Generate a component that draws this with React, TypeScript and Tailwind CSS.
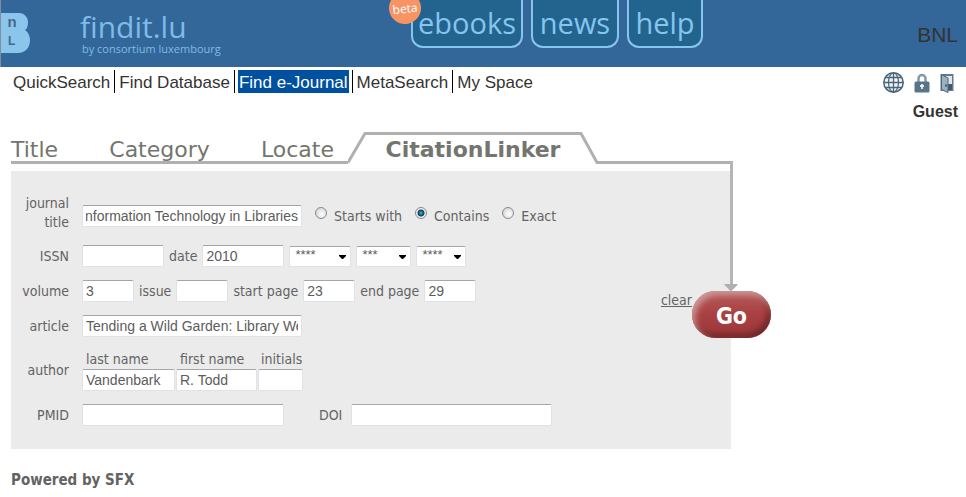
import type { InputHTMLAttributes, ReactNode } from 'react';

const navItems = ['QuickSearch', 'Find Database', 'Find e-Journal', 'MetaSearch', 'My Space'];

const matchModes = ['Starts with', 'Contains', 'Exact'];

const Field = ({ className = '', ...props }: InputHTMLAttributes<HTMLInputElement>) => (
  <input
    type="text"
    className={`h-[22px] px-[3px] bg-white border border-[#e0e2ea] border-t-[#a5a5ad] rounded-[2px] font-['Liberation_Sans',Arial,sans-serif] text-sm text-[#5c5c5c] ${className}`}
    {...props}
  />
);

const Row = ({ label, htmlFor, children }: { label: string; htmlFor: string; children: ReactNode }) => (
  <div className="flex items-center gap-[13px]">
    <label htmlFor={htmlFor} className="w-[58px] shrink-0 text-right">
      {label}
    </label>
    {children}
  </div>
);

const Picker = ({ label, value, className }: { label: string; value: string; className: string }) => (
  <span className={`relative ${className}`}>
    <select
      aria-label={label}
      className="block w-full h-[21px] pl-[5px] pb-[3px] appearance-none bg-white border border-[#e0e2ea] border-t-[#a5a5ad] rounded-[2px] font-['Liberation_Sans',Arial,sans-serif] text-[13px] leading-4 text-[#5c5c5c]"
    >
      <option>{value}</option>
    </select>
    <svg viewBox="0 0 7 4" className="absolute right-[5px] top-[9px] w-[7px] h-1 pointer-events-none">
      <path d="M0 0h7v1L4 4H3L0 1z" fill="#000" />
    </svg>
  </span>
);

const Header = () => (
  <header className="flex h-[67px] bg-[#336699] overflow-hidden">
    <svg viewBox="0 0 30 67" className="w-[30px] h-[67px] shrink-0">
      <rect width="1" height="67" fill="#7f8f9f" />
      <path d="M1 13h18c5 0 9 4 9 9 0 4-1 7-3 8 3 2 5 6 5 10 0 8-5 13-12 13H1z" fill="#8ac6ec" />
      <text x="7.500" y="27" fontSize="15" fontWeight="700" fill="#46698a" fontFamily="Liberation Sans, sans-serif">n</text>
      <text x="8" y="45" fontSize="12" fontWeight="700" fill="#46698a" fontFamily="Liberation Sans, sans-serif">L</text>
    </svg>
    <div className="w-[331px] pl-[50px] pt-[7px] font-['Open_Sans',sans-serif] text-[#7ebce8] whitespace-nowrap">
      <div className="text-[30px] leading-10">findit.lu</div>
      <div className="-mt-1 pl-0.5 text-[11px] leading-3">by consortium luxembourg</div>
    </div>
    <nav className="relative ml-[50px] flex h-12 gap-2 font-['Open_Sans',sans-serif] text-[29px] leading-[46px] text-[#86c5ee] text-center">
      <a href="#ebooks" className="w-28 border-2 border-t-0 border-[#86c5ee] rounded-b-xl bg-[#23648f]">ebooks</a>
      <a href="#news" className="w-[88px] border-2 border-t-0 border-[#86c5ee] rounded-b-xl bg-[#23648f]">news</a>
      <a href="#help" className="w-[76px] border-2 border-t-0 border-[#86c5ee] rounded-b-xl bg-[#23648f]">help</a>
      <span className="absolute -left-[22px] -top-2 flex size-8 items-center justify-center rounded-full bg-[#f79463] pt-0.5 text-white text-[12px] leading-3 -rotate-6">
        beta
      </span>
    </nav>
    <div className="ml-auto mr-2 mt-[22px] font-['Liberation_Sans',Arial,sans-serif] text-[21px] leading-[26px] text-[#333]">
      BNL
    </div>
  </header>
);

const GlobeIcon = () => (
  <svg viewBox="0 0 21 21" className="size-[21px]" fill="none" stroke="#4a6478">
    <circle cx="10.500" cy="10.500" r="9.700" fill="#eef3f6" strokeWidth="1.500" />
    <ellipse cx="10.500" cy="10.500" rx="5" ry="9.500" strokeWidth="1.200" />
    <path d="M10.500 1v19M1 10.500h19M3 5.500h15M3 15.500h15" strokeWidth="1.300" />
  </svg>
);

const LockIcon = () => (
  <svg viewBox="0 0 16 20" className="w-4 h-5">
    <path d="M4.500 10V5.500a3.500 3.500 0 0 1 7 0V10" fill="none" stroke="#8299a8" strokeWidth="2.500" />
    <rect x="0.500" y="8.500" width="15" height="11" rx="1.500" fill="#587488" />
    <path d="M8 11v5M6 13h4" stroke="#fff" strokeWidth="1.500" />
  </svg>
);

const DoorIcon = () => (
  <svg viewBox="0 0 14 20" className="w-3.5 h-5">
    <path d="M0.500 1h13v17h-13z" fill="#64798a" />
    <path d="M6 3h6v8H6z" fill="#dfe7ee" />
    <path d="M6 11h6v6H6z" fill="#43586a" />
    <path d="M1.500 1.500 8 5v14.500l-6.500-3z" fill="#9cb0bf" stroke="#4d6578" />
    <path d="M6 11.500v2" stroke="#2d3e4b" strokeWidth="1.500" />
  </svg>
);

const Navigation = () => (
  <div className="flex justify-between pt-[3px] px-2 font-['Liberation_Sans',Arial,sans-serif] text-[#333]">
    <ul className="flex h-[23px] pl-px text-[17px] leading-[25px]">
      {navItems.map((item) => (
        <li key={item} className="px-[3px] border-l border-black first:border-l-0">
          <a
            href="#"
            className={item === 'Find e-Journal' ? 'block h-[23px] px-px bg-[#0050a0] text-white' : 'block px-px'}
          >
            {item}
          </a>
        </li>
      ))}
    </ul>
    <div className="text-right">
      <div className="flex h-[25px] items-center justify-end gap-2.5 pr-1">
        <button type="button" aria-label="Language"><GlobeIcon /></button>
        <button type="button" aria-label="Login"><LockIcon /></button>
        <button type="button" aria-label="Leave"><DoorIcon /></button>
      </div>
      <div className="mt-[5px] text-base leading-[23px] font-bold">Guest</div>
    </div>
  </div>
);

const Tabs = () => (
  <nav className="flex h-8 font-['DejaVu_Sans',Verdana,sans-serif] text-[22px] leading-9 text-[#73756f]">
    <div className="flex w-[337px] justify-between pr-3.5 border-b-[3px] border-[#b0b0b0]">
      <a href="#title">Title</a>
      <a href="#category">Category</a>
      <a href="#locate">Locate</a>
    </div>
    <svg viewBox="0 0 18 32" className="w-[18px] h-8" fill="none">
      <path d="M0 30.500 17 1.500h1" stroke="#b0b0b0" strokeWidth="3" />
    </svg>
    <a href="#citation" className="w-[214px] border-t-[3px] border-[#b0b0b0] leading-[30px] font-bold text-center">
      CitationLinker
    </a>
    <svg viewBox="0 0 18 32" className="w-[18px] h-8" fill="none">
      <path d="M0 1.500h1l16 29h1" stroke="#b0b0b0" strokeWidth="3" />
    </svg>
    <div className="flex-1 border-b-[3px] border-[#b0b0b0]" />
  </nav>
);

const CitationForm = () => (
  <form className="relative mt-[7px] mr-0.5 py-[23px] flex flex-col gap-[13px] bg-[#ebebeb] text-sm leading-[19px]">
    <Row label="journal title" htmlFor="journal">
      <div className="flex items-center gap-[13px] pt-1.5">
        <Field id="journal" dir="rtl" defaultValue="Information Technology in Libraries" className="w-[220px]" />
        {matchModes.map((mode) => (
          <label key={mode} className="flex items-center gap-[7px]">
            <input
              type="radio"
              name="match"
              defaultChecked={mode === 'Contains'}
              className="mb-1.5 size-3 appearance-none rounded-full border border-[#8a8a8a] bg-[radial-gradient(circle_at_60%_60%,#fff,#c8cacc)] checked:bg-[radial-gradient(circle,#3fb4e0_0,#0d3a5c_3px,#f0f0f0_4px)]"
            />
            {mode}
          </label>
        ))}
      </div>
    </Row>
    <Row label="ISSN" htmlFor="issn">
      <div className="flex items-center gap-[5px]">
        <Field id="issn" className="w-[82px]" />
        <label htmlFor="date">date</label>
        <Field id="date" defaultValue="2010" className="w-[82px]" />
        <Picker label="Year" value="****" className="w-[62px]" />
        <Picker label="Month" value="***" className="w-[55px]" />
        <Picker label="Day" value="****" className="w-[50px]" />
      </div>
    </Row>
    <Row label="volume" htmlFor="volume">
      <div className="flex items-center gap-[5px]">
        <Field id="volume" defaultValue="3" className="w-[52px]" />
        <label htmlFor="issue">issue</label>
        <Field id="issue" className="w-[52px]" />
        <label htmlFor="start">start page</label>
        <Field id="start" defaultValue="23" className="w-[52px]" />
        <label htmlFor="end">end page</label>
        <Field id="end" defaultValue="29" className="w-[52px]" />
      </div>
    </Row>
    <Row label="article" htmlFor="article">
      <Field id="article" defaultValue="Tending a Wild Garden: Library Web Design" className="w-[220px]" />
    </Row>
    <Row label="author" htmlFor="last">
      <div className="flex gap-px">
        <div className="flex flex-col">
          <label htmlFor="last" className="pl-1">last name</label>
          <Field id="last" defaultValue="Vandenbark" className="w-[93px]" />
        </div>
        <div className="flex flex-col">
          <label htmlFor="first" className="pl-1">first name</label>
          <Field id="first" defaultValue="R. Todd" className="w-[81px]" />
        </div>
        <div className="flex flex-col">
          <label htmlFor="initials" className="pl-[3px]">initials</label>
          <Field id="initials" className="w-[45px]" />
        </div>
      </div>
    </Row>
    <Row label="PMID" htmlFor="pmid">
      <div className="flex items-center gap-[5px]">
        <Field id="pmid" className="w-[202px]" />
        <label htmlFor="doi" className="pl-[30px] pr-1">DOI</label>
        <Field id="doi" className="w-[201px]" />
      </div>
    </Row>

    {/* Line leading from the tab strip to the Go button */}
    <svg viewBox="0 0 14 130" className="absolute -right-[7px] -top-2.5 w-3.5 h-[130px]">
      <path d="M6 0h3v123H6z" fill="#b5b5b5" />
      <path d="M0.500 123h13v1l-6 6h-1l-6-6z" fill="#b0b0b0" />
    </svg>
    <div className="absolute -right-10 top-[120px] flex items-start">
      <button type="reset" className="underline">clear</button>
      <button
        type="submit"
        className="w-[79px] h-[47px] pt-[3px] rounded-full bg-linear-to-b from-[#b65a5a] via-[#a94042] to-[#9c383a] text-white text-[23px] font-bold shadow-[inset_3px_4px_6px_#cf9a9a,inset_-3px_-4px_6px_#6e2426]"
      >
        Go
      </button>
    </div>
  </form>
);

const App = () => {
  return (
    <div className="min-h-screen bg-white">
      <Header />
      <Navigation />
      <main className="max-w-[733px] pl-[11px] mt-[9px] font-['DejaVu_Sans_Condensed',Tahoma,'DejaVu_Sans',sans-serif] text-[#636363]">
        <Tabs />
        <CitationForm />
        <footer className="mt-5 text-[15px] leading-[22px] font-bold">Powered by SFX</footer>
      </main>
    </div>
  );
};

export default App;
